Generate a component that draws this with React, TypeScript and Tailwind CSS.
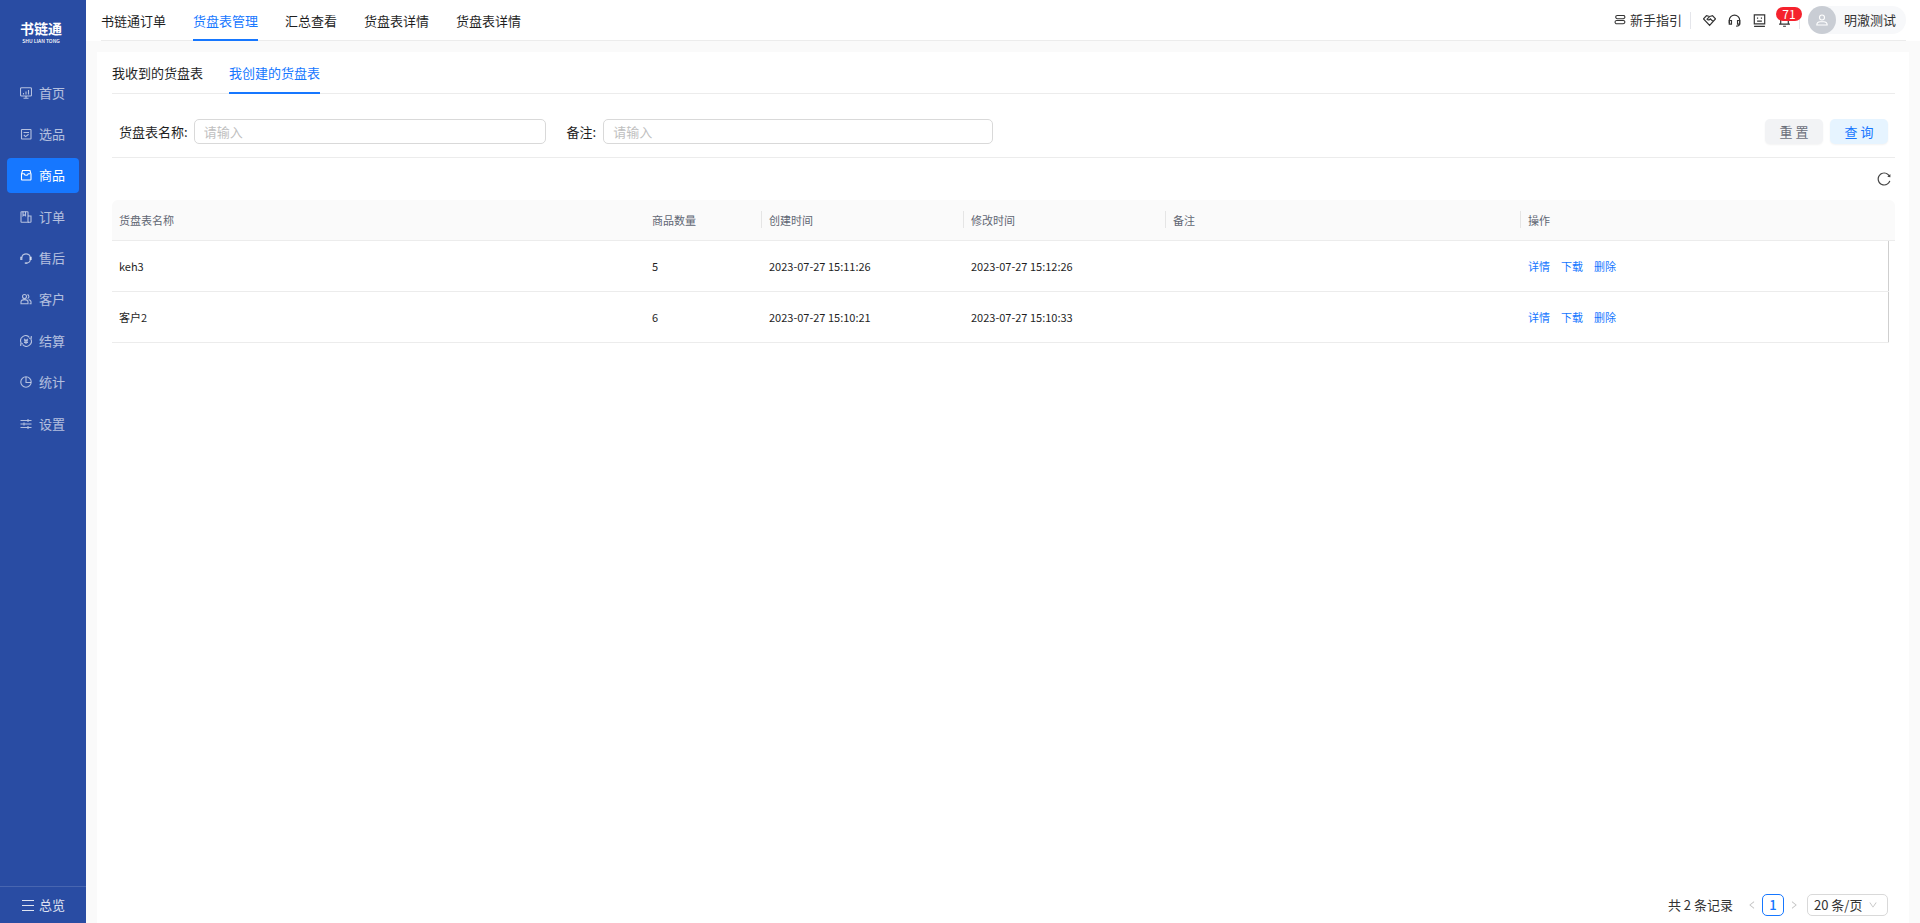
import type { ReactNode } from 'react'
import { useState } from 'react'
import { AiOutlineDown, AiOutlineLeft, AiOutlineReload, AiOutlineRight } from 'react-icons/ai'

interface IconProps {
  children: ReactNode
  className?: string
}

function Icon({ children, className = 'size-3' }: IconProps) {
  return (
    <svg viewBox="0 0 12 12" fill="none" stroke="currentColor" strokeWidth="1.1" className={`shrink-0 ${className}`} aria-hidden="true">
      {children}
    </svg>
  )
}

const menu = [
  {
    label: '首页',
    icon: (
      <>
        <rect x="0.5" y="0.8" width="11" height="8.2" rx="1" />
        <path d="M3.5 7.5V6M6 7.5V4.5M8.5 7.5V3M3.5 11.2h5M6 9v2" />
      </>
    ),
  },
  {
    label: '选品',
    icon: (
      <>
        <rect x="1.5" y="1.5" width="9.5" height="9.5" rx="0.4" />
        <path d="M3.5 4.5H9M3.8 7l1.8 1.6 3-2.4" />
      </>
    ),
  },
  {
    label: '商品',
    icon: (
      <>
        <path d="M2.5 1.5H10l1 3.5v5.3a.7.7 0 0 1-.7.7H2.2a.7.7 0 0 1-.7-.7V5z" />
        <path d="M2 4.8h2.2c.3 1 1.100 1.500 2 1.500s1.700-.5 2-1.500h2.300" />
      </>
    ),
  },
  {
    label: '订单',
    icon: (
      <>
        <path d="M8 11.3H1.6a.6.6 0 0 1-.6-.6V1.3a.6.6 0 0 1 .6-.6h5.8a.6.6 0 0 1 .6.6z" />
        <path d="M8 5h3v5.7a.6.6 0 0 1-.6.6H8M3 .8v4l1.200-.9 1.300.9v-4" />
      </>
    ),
  },
  {
    label: '售后',
    icon: (
      <>
        <path d="M1.8 5.5a4.3 4.3 0 0 1 8.5 0v1.8c0 2.200-1.300 3.500-3.500 3.800" />
        <path d="M1.300 4.800V8M10.700 4.800V8" strokeWidth="2.200" />
        <path d="M4.800 11.100h2.400" strokeWidth="1.600" />
      </>
    ),
  },
  {
    label: '客户',
    icon: (
      <>
        <circle cx="4.5" cy="3.5" r="2" />
        <path d="M1 10.8V9c0-1.600 1.300-2.400 3.500-2.400S8 7.400 8 9v1.800zM7.400 1.600a2 2 0 0 1 .2 3.800M8.600 6.700c1.500.2 2.400 1 2.400 2.300v1.800H9.500" />
      </>
    ),
  },
  {
    label: '结算',
    icon: (
      <>
        <path d="M1.200 8A5 5 0 0 1 9.300 2.300M10.800 4a5 5 0 0 1-8.100 5.700" />
        <path d="M9 3.300h2.300V1M3 8.800H.7v2.300M4.200 3.800L6 5.600l1.800-1.800M4 5.800h4M4 7.400h4M6 5.600V9" />
      </>
    ),
  },
  {
    label: '统计',
    icon: (
      <>
        <circle cx="6" cy="6" r="5.2" />
        <path d="M6 1v5.5h5" />
      </>
    ),
  },
  {
    label: '设置',
    icon: <path d="M.5 2.5h11M.5 6h11M.5 9.5h11M8 1v3M4 4.500v3M8 8v3" />,
  },
]

const navTabs = ['书链通订单', '货盘表管理', '汇总查看', '货盘表详情', '货盘表详情']
const pageTabs = ['我收到的货盘表', '我创建的货盘表']

const columns = [
  { title: '货盘表名称', width: '', divider: false },
  { title: '商品数量', width: 'w-[117px]', divider: true },
  { title: '创建时间', width: 'w-[202px]', divider: true },
  { title: '修改时间', width: 'w-[202px]', divider: true },
  { title: '备注', width: 'w-[355px]', divider: true },
  { title: '操作', width: 'w-[367px]', divider: false },
]

const rows = [
  { name: 'keh3', count: 5, created: '2023-07-27 15:11:26', updated: '2023-07-27 15:12:26', remark: '' },
  { name: '客户2', count: 6, created: '2023-07-27 15:10:21', updated: '2023-07-27 15:10:33', remark: '' },
]

function Sidebar() {
  const [active, setActive] = useState('商品')

  return (
    <aside className="flex w-[86px] shrink-0 flex-col bg-[#294ca3] text-white">
      <div className="flex h-[75px] flex-col items-center pt-5 pr-1">
        <span className="text-[14px] leading-[17px] font-bold">书链通</span>
        <span className="text-[5px] leading-[8px] font-medium">SHU LIAN TONG</span>
      </div>
      <nav className="flex h-[366px] flex-col justify-between px-[7px]">
        {menu.map(({ label, icon }) => (
          <button
            key={label}
            onClick={() => setActive(label)}
            className={`flex h-[35px] items-center gap-[7px] rounded pl-[13px] ${
              active === label ? 'bg-[#1677ff] text-white' : 'text-white/65'
            }`}
          >
            <Icon>{icon}</Icon>
            {label}
          </button>
        ))}
      </nav>
      <button className="mt-auto flex h-[37px] items-center gap-[5px] border-t border-white/15 pl-[22px] text-white/85">
        <Icon>
          <path d="M0 1.5h12M0 6.5h12M0 11.5h12" />
        </Icon>
        总览
      </button>
    </aside>
  )
}

function Header() {
  const [active, setActive] = useState(1)

  return (
    <header className="bg-white pr-[14px] pl-[15px]">
      <div className="flex h-[41px] justify-between border-b border-[#ececec]">
        <nav className="-mb-px flex gap-[27px]">
          {navTabs.map((tab, i) => (
            <button
              key={i}
              onClick={() => setActive(i)}
              className={`border-b-2 pt-[2px] ${active === i ? 'border-[#1677ff] text-[#1677ff]' : 'border-transparent'}`}
            >
              {tab}
            </button>
          ))}
        </nav>
        <div className="flex items-center text-[#333]">
          <a href="#guide" className="flex items-center gap-1">
            <Icon>
              <path d="M10.5 1.5H3.3a1.500 1.500 0 0 0 0 3.200h6.200M8.500 1.500h.8a1.600 1.600 0 0 1 0 3.200M2.500 6.500h6.800a1.500 1.500 0 0 1 0 3.200H2.800A1.500 1.500 0 0 1 2.500 6.500" />
            </Icon>
            新手指引
          </a>
          <span className="mx-2 h-[17px] w-px bg-[#e5e6eb]" />
          <button aria-label="合作" className="ml-1">
            <Icon className="size-[13px]">
              <path d="M3.2 1.5L.5 4.500l5.600 6 5.400-6-2.700-3-2.600.8zM6.300 2.200L3.700 4.800c.9 1.100 2.200.7 3.100-.4l2.500 2.500" />
            </Icon>
          </button>
          <button aria-label="客服" className="ml-3">
            <Icon className="size-[13px]">
              <path d="M1.200 8.500V5.800a4.800 4.800 0 0 1 9.600 0v2.700c0 1.700-1.200 2.700-3.300 2.700" />
              <path d="M1.200 6h2v3.300h-2zM8.800 6h2v3.300h-2z" />
            </Icon>
          </button>
          <button aria-label="机器人" className="ml-3">
            <Icon className="size-[13px]">
              <path d="M1.200.8h9.600v8.400H1.200zM1 11.400h10M4.200 3.200v1.200M7.800 3.200v1.200M3.800 6.500h4.400" />
            </Icon>
          </button>
          <button aria-label="通知" className="relative ml-3">
            <Icon className="size-[13px]">
              <path d="M2.500 9V5a3.500 3.500 0 0 1 7 0v4M1 9.300h10M4.700 11.300h2.600" />
            </Icon>
            <span className="absolute -top-[7px] -left-[2px] h-[14px] w-[26px] rounded-full bg-[#f5222d] text-center text-xs leading-[14px] text-white">
              71
            </span>
          </button>
          <span className="mx-2 h-[17px] w-px bg-[#e5e6eb]" />
          <button className="flex items-center gap-2 rounded-full bg-[#f7f8fa] pr-[10px]">
            <span className="flex size-7 items-center justify-center rounded-full bg-[#c9cdd4] text-white">
              <Icon>
                <circle cx="6" cy="3.5" r="2.5" />
                <path d="M.8 11c0-2.300 1.500-3.300 3.500-3.300h3.400c2 0 3.500 1 3.500 3.300z" />
              </Icon>
            </span>
            明澈测试
          </button>
        </div>
      </div>
    </header>
  )
}

function SearchForm() {
  return (
    <form
      onSubmit={(e) => e.preventDefault()}
      className="grid grid-cols-4 items-center gap-[21px] border-b border-[#ececec] pt-[25px] pr-[7px] pb-[13px] pl-[7px]"
    >
      <div className="flex items-center gap-[6px]">
        <label htmlFor="name" className="shrink-0">货盘表名称:</label>
        <input id="name" placeholder="请输入" className="h-[25px] min-w-0 flex-1 rounded-[5px] border border-[#d9d9d9] px-[9px] placeholder:text-[#bfbfbf]" />
      </div>
      <div className="flex items-center gap-[7px]">
        <label htmlFor="remark" className="shrink-0">备注:</label>
        <input id="remark" placeholder="请输入" className="h-[25px] min-w-0 flex-1 rounded-[5px] border border-[#d9d9d9] px-[9px] placeholder:text-[#bfbfbf]" />
      </div>
      <div className="col-start-4 flex justify-end gap-[7px]">
        <button type="reset" className="h-[25px] w-[58px] rounded-[5px] bg-[#f2f3f5] text-[#6b6f7a] shadow-xs">重 置</button>
        <button type="submit" className="h-[25px] w-[58px] rounded-[5px] bg-[#e6f4ff] text-[#1677ff] shadow-xs">查 询</button>
      </div>
    </form>
  )
}

function PalletTable() {
  return (
    <table className="w-full table-fixed text-left text-[11px]">
      <thead>
        <tr className="h-10 text-[#5f6673]">
          {columns.map(({ title, width, divider }, i) => (
            <th
              key={title}
              className={`border-b border-[#ececec] bg-[#fafafa] pl-[7px] font-normal ${width} ${i === 0 ? 'rounded-tl-md' : ''}`}
            >
              <div className={`flex h-[17px] items-center ${divider ? 'border-r border-[#e5e5e5]' : ''}`}>{title}</div>
            </th>
          ))}
          <th className="w-[7px] rounded-tr-md border-b border-[#ececec] bg-[#fafafa]" />
        </tr>
      </thead>
      <tbody>
        {rows.map((row) => (
          <tr key={row.name} className="h-[51px]">
            <td className="border-b border-[#ececec] pl-[7px]">{row.name}</td>
            <td className="border-b border-[#ececec] pl-[7px]">{row.count}</td>
            <td className="border-b border-[#ececec] pl-[7px]">{row.created}</td>
            <td className="border-b border-[#ececec] pl-[7px]">{row.updated}</td>
            <td className="border-b border-[#ececec] pl-[7px]">{row.remark}</td>
            <td className="border-b border-[#ececec] pl-[7px]">
              <div className="flex gap-[11px] text-[#1677ff]">
                <a href="#detail">详情</a>
                <a href="#download">下载</a>
                <a href="#delete">删除</a>
              </div>
            </td>
            <td className="border-l border-[#cfcfcf]" />
          </tr>
        ))}
      </tbody>
    </table>
  )
}

function Pagination() {
  return (
    <div className="mt-auto flex items-center justify-end pr-[7px] pb-[7px] text-[#333]">
      <span className="mr-[14px]">共 2 条记录</span>
      <button aria-label="上一页" className="text-[#c0c0c0]">
        <AiOutlineLeft className="size-[10px]" />
      </button>
      <button className="mx-[5px] size-[22px] rounded-[5px] border border-[#1677ff] font-medium text-[#1677ff]">1</button>
      <button aria-label="下一页" className="text-[#c0c0c0]">
        <AiOutlineRight className="size-[10px]" />
      </button>
      <div className="relative ml-2">
        <select aria-label="每页条数" className="h-[22px] w-[81px] appearance-none rounded-[5px] border border-[#d9d9d9] bg-white pl-[6px]">
          <option>20 条/页</option>
          <option>50 条/页</option>
        </select>
        <AiOutlineDown className="pointer-events-none absolute top-[6px] right-[10px] size-[10px] text-[#bfbfbf]" />
      </div>
    </div>
  )
}

export default function App() {
  const [tab, setTab] = useState(1)

  return (
    <div className="flex min-h-screen bg-[#fafafa] font-['Noto_Sans_CJK_SC',sans-serif] text-[13px] leading-5 text-[#1f1f1f]">
      <Sidebar />
      <div className="flex min-w-0 flex-1 flex-col">
        <Header />
        <main className="mx-[11px] mt-[11px] flex flex-1 flex-col bg-white pr-[14px] pl-[15px]">
          {/* Tabs */}
          <div className="flex h-[42px] gap-[26px] border-b border-[#ececec]">
            {pageTabs.map((label, i) => (
              <button
                key={label}
                onClick={() => setTab(i)}
                className={`-mb-px border-b-2 pt-[2px] ${tab === i ? 'border-[#1677ff] text-[#1677ff]' : 'border-transparent'}`}
              >
                {label}
              </button>
            ))}
          </div>

          <SearchForm />
          <div className="flex h-[42px] items-center justify-end pr-[3px]">
            <button aria-label="刷新" className="text-[#444]">
              <AiOutlineReload className="size-4" />
            </button>
          </div>
          <PalletTable />
          <Pagination />
        </main>
      </div>
    </div>
  )
}
